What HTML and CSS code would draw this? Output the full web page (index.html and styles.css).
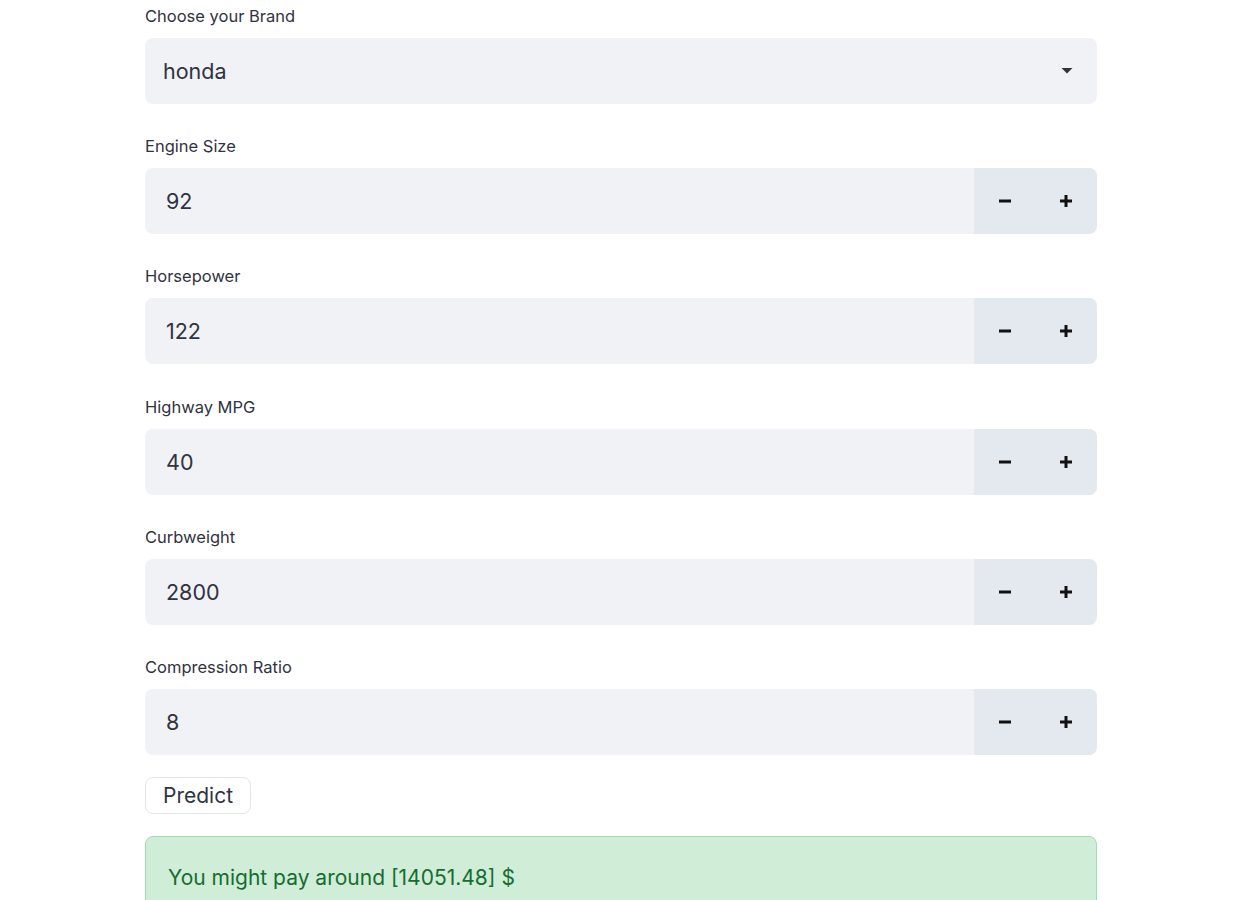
FILE: index.html
```html
<!DOCTYPE html>
<html>
<head>
<meta charset="utf-8">
<link rel="stylesheet" href="styles.css">
</head>
<body>
<div class="main">
  <div class="field">
    <div class="label">Choose your Brand</div>
    <div class="select">
      <span class="value sel">honda</span>
      <svg class="caret" width="12" height="6" viewBox="0 0 12 6"><path d="M0.5 0 H11.5 L6 5.5 Z" fill="#31333f"/></svg>
    </div>
  </div>
  <div class="field">
    <div class="label">Engine Size</div>
    <div class="number">
      <span class="value">92</span>
      <div class="steps">
        <div class="step"><svg width="12" height="12" viewBox="0 0 12 12"><rect x="0" y="4.5" width="12" height="3" fill="#111"/></svg></div>
        <div class="step"><svg width="12" height="12" viewBox="0 0 12 12"><rect x="0" y="4.5" width="12" height="3" fill="#111"/><rect x="4.5" y="0" width="3" height="12" fill="#111"/></svg></div>
      </div>
    </div>
  </div>
  <div class="field">
    <div class="label">Horsepower</div>
    <div class="number">
      <span class="value">122</span>
      <div class="steps">
        <div class="step"><svg width="12" height="12" viewBox="0 0 12 12"><rect x="0" y="4.5" width="12" height="3" fill="#111"/></svg></div>
        <div class="step"><svg width="12" height="12" viewBox="0 0 12 12"><rect x="0" y="4.5" width="12" height="3" fill="#111"/><rect x="4.5" y="0" width="3" height="12" fill="#111"/></svg></div>
      </div>
    </div>
  </div>
  <div class="field">
    <div class="label">Highway MPG</div>
    <div class="number">
      <span class="value">40</span>
      <div class="steps">
        <div class="step"><svg width="12" height="12" viewBox="0 0 12 12"><rect x="0" y="4.5" width="12" height="3" fill="#111"/></svg></div>
        <div class="step"><svg width="12" height="12" viewBox="0 0 12 12"><rect x="0" y="4.5" width="12" height="3" fill="#111"/><rect x="4.5" y="0" width="3" height="12" fill="#111"/></svg></div>
      </div>
    </div>
  </div>
  <div class="field">
    <div class="label">Curbweight</div>
    <div class="number">
      <span class="value">2800</span>
      <div class="steps">
        <div class="step"><svg width="12" height="12" viewBox="0 0 12 12"><rect x="0" y="4.5" width="12" height="3" fill="#111"/></svg></div>
        <div class="step"><svg width="12" height="12" viewBox="0 0 12 12"><rect x="0" y="4.5" width="12" height="3" fill="#111"/><rect x="4.5" y="0" width="3" height="12" fill="#111"/></svg></div>
      </div>
    </div>
  </div>
  <div class="field last">
    <div class="label">Compression Ratio</div>
    <div class="number">
      <span class="value">8</span>
      <div class="steps">
        <div class="step"><svg width="12" height="12" viewBox="0 0 12 12"><rect x="0" y="4.5" width="12" height="3" fill="#111"/></svg></div>
        <div class="step"><svg width="12" height="12" viewBox="0 0 12 12"><rect x="0" y="4.5" width="12" height="3" fill="#111"/><rect x="4.5" y="0" width="3" height="12" fill="#111"/></svg></div>
      </div>
    </div>
  </div>
  <button class="btn">Predict</button>
  <div class="alert">You might pay around [14051.48] $</div>
</div>
</body>
</html>
```
FILE: styles.css
```css
html, body {
  margin: 0;
  padding: 0;
  background: #ffffff;
  font-family: "Inter", "Open Sans", sans-serif;
  color: #31333f;
}
.main {
  width: 952px;
  margin-left: 145px;
  padding-top: 4px;
  display: flex;
  flex-direction: column;
}
.field {
  display: flex;
  flex-direction: column;
  margin-bottom: 30.2px;
}
.field.last {
  margin-bottom: 22px;
}
.label {
  font-size: 16.5px;
  line-height: 24px;
  height: 24px;
  margin-bottom: 10px;
  color: #31333f;
}
.select, .number {
  height: 66px;
  background: #f0f2f6;
  border-radius: 8px;
  display: flex;
  align-items: center;
  overflow: hidden;
}
.value {
  font-size: 21.5px;
  padding-left: 21px;
  flex: 1;
  color: #31333f;
}
.value.sel {
  padding-left: 18px;
}
.caret {
  margin-right: 24px;
}
.steps {
  display: flex;
  height: 100%;
  width: 123px;
  background: #e4e8ef;
}
.step {
  flex: 1;
  display: flex;
  align-items: center;
  justify-content: center;
}
.btn {
  align-self: flex-start;
  height: 37px;
  width: 106px;
  background: #ffffff;
  border: 1px solid #e3e5ea;
  border-radius: 8px;
  font-family: inherit;
  font-size: 21px;
  color: #31333f;
  padding: 0;
  margin-bottom: 22px;
}
.alert {
  background: #d0edd8;
  border: 1px solid #a2ddb2;
  border-radius: 8px;
  color: #176c33;
  font-size: 21px;
  line-height: 28px;
  padding: 27px 22px 38px;
}
```
